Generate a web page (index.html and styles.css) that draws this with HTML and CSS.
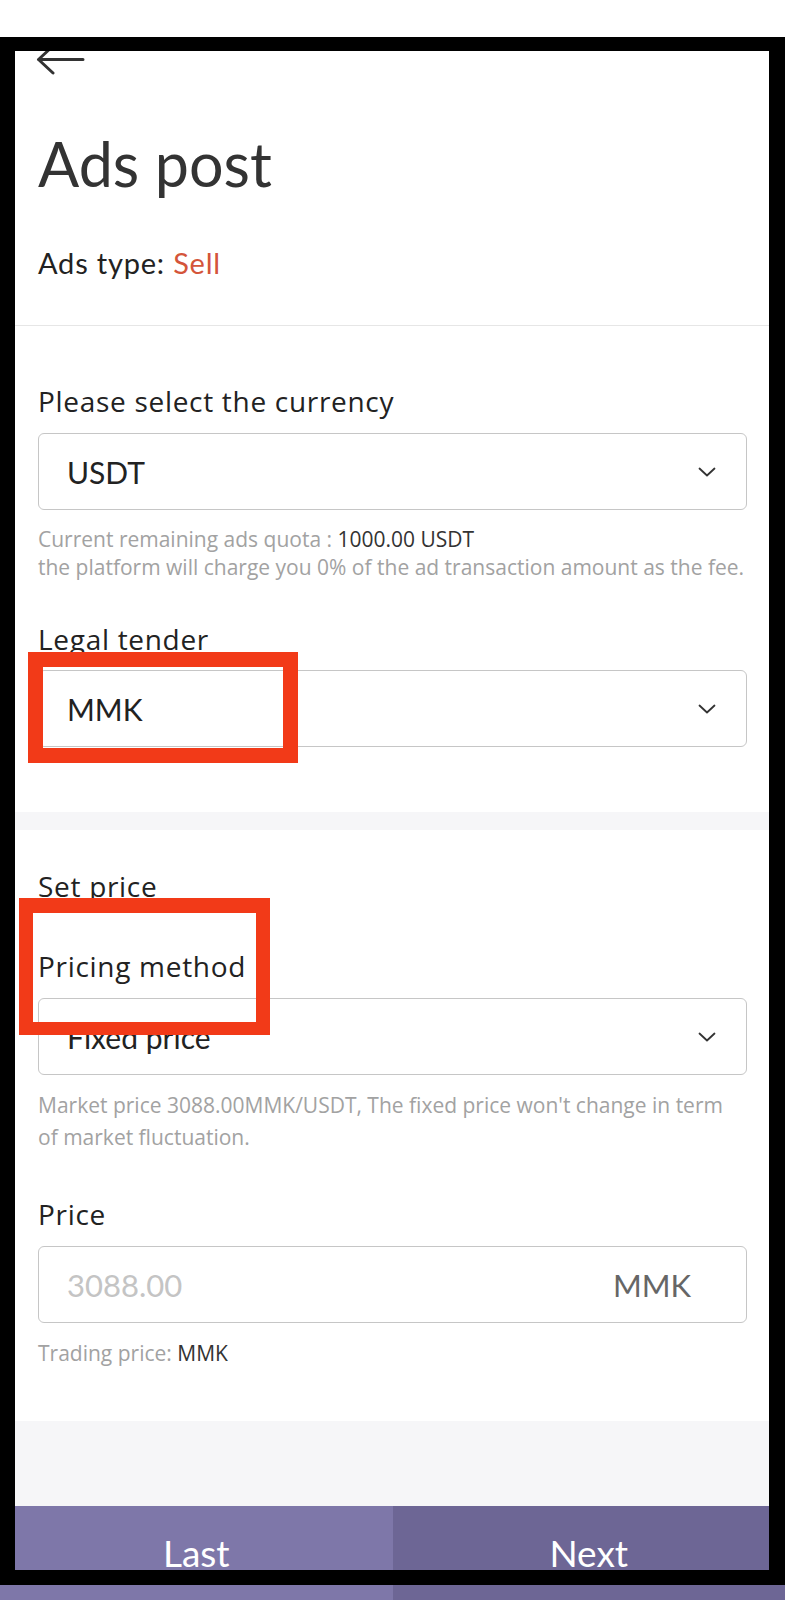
FILE: index.html
```html
<!DOCTYPE html>
<html lang="en">
<head>
<meta charset="utf-8">
<title>Ads post</title>
<link rel="stylesheet" href="styles.css">
</head>
<body>
<div class="page">
  <header class="head">
    <div class="topbar">
      <svg class="back" viewBox="0 0 49 31" width="49" height="31" aria-hidden="true">
        <path d="M2.5 15.5 H47 M17 2 L2.5 15.5 L17 29" fill="none" stroke="#333" stroke-width="3" stroke-linecap="round" stroke-linejoin="round"/>
      </svg>
    </div>
    <h1 class="title">Ads post</h1>
    <p class="ads-type">Ads type: <span class="sell">Sell</span></p>
  </header>

  <section class="section sec-currency">
    <p class="label">Please select the currency</p>
    <div class="select sel-first">
      <span class="value">USDT</span>
      <svg class="chev" viewBox="0 0 18 10" width="18" height="10" aria-hidden="true"><path d="M1.5 1.5 L9 8.5 L16.5 1.5" fill="none" stroke="#333" stroke-width="1.8" stroke-linecap="round" stroke-linejoin="round"/></svg>
    </div>
    <p class="helper helper-quota">Current remaining ads quota : <span class="strong">1000.00 USDT</span><br>the platform will charge you 0% of the ad transaction amount as the fee.</p>
    <p class="label label-legal">Legal tender</p>
    <div class="select sel-legal">
      <span class="value">MMK</span>
      <svg class="chev" viewBox="0 0 18 10" width="18" height="10" aria-hidden="true"><path d="M1.5 1.5 L9 8.5 L16.5 1.5" fill="none" stroke="#333" stroke-width="1.8" stroke-linecap="round" stroke-linejoin="round"/></svg>
    </div>
  </section>

  <div class="band"></div>

  <section class="section sec-price">
    <p class="label">Set price</p>
    <p class="label label-method">Pricing method</p>
    <div class="select sel-method">
      <span class="value">Fixed price</span>
      <svg class="chev" viewBox="0 0 18 10" width="18" height="10" aria-hidden="true"><path d="M1.5 1.5 L9 8.5 L16.5 1.5" fill="none" stroke="#333" stroke-width="1.8" stroke-linecap="round" stroke-linejoin="round"/></svg>
    </div>
    <p class="helper helper-market">Market price 3088.00MMK/USDT, The fixed price won't change in term<br>of market fluctuation.</p>
    <p class="label label-price">Price</p>
    <div class="select input">
      <span class="placeholder">3088.00</span>
      <span class="unit">MMK</span>
    </div>
    <p class="helper trading">Trading price: <span class="strong">MMK</span></p>
  </section>

  <div class="filler"></div>

  <div class="actions">
    <div class="btn btn-last">Last</div>
    <div class="btn btn-next">Next</div>
  </div>

  <div class="frame"></div>
  <div class="mark mark-legal"></div>
  <div class="mark mark-method"></div>
</div>
</body>
</html>
```
FILE: styles.css
```css
* { box-sizing: border-box; }
html, body { margin: 0; padding: 0; background: #fff; }
body { font-family: Lato, "Liberation Sans", sans-serif; color: #333; }

.page { position: relative; width: 785px; height: 1600px; overflow: hidden; background: #fff; }

.head { padding-bottom: 45px; border-bottom: 1px solid #e6e6e6; }
.topbar { height: 127px; padding: 44px 0 0 36px; }
.back { display: block; }
.title { margin: 0; padding-left: 38px; font-size: 61px; line-height: 73px; font-weight: 400; color: #333; }
.ads-type { margin: 45px 0 0; padding-left: 38px; font-size: 29px; line-height: 35px; color: #222; letter-spacing: 0.8px; }
.sell { color: #d4553a; }

.section { padding: 0 38px; }
.sec-currency { padding-top: 58px; padding-bottom: 65px; }
.sec-price { padding-top: 39px; padding-bottom: 54px; }

.label { margin: 0; font-family: "Open Sans", Lato, sans-serif; font-size: 28px; line-height: 34px; color: #222; letter-spacing: 0.7px; }
.label-legal { margin-top: 41px; }
.label-method { margin-top: 46px; }
.label-price { margin-top: 44px; }

.select {
  height: 77px;
  margin-top: 15px;
  border: 1.5px solid #c6c6c6;
  border-radius: 6px;
  display: flex;
  align-items: center;
  justify-content: space-between;
  padding: 0 30px 0 28px;
  font-size: 30px;
  color: #222;
}
.sel-legal { margin-top: 14px; }
.chev { display: block; }

.input { padding-right: 55px; }
.placeholder { color: #c4c4c4; font-size: 31px; }
.unit { color: #666; font-size: 31px; }

.helper { margin: 15px 0 0; font-family: "Open Sans", Lato, sans-serif; font-size: 21px; line-height: 28px; color: #a2a2a2; }
.helper .strong { color: #333; }
.helper-market { margin-top: 14px; line-height: 32px; }
.trading { margin-top: 16px; font-size: 21px; }

.band { height: 18px; background: #f6f6f8; }
.filler { height: 85px; background: #f6f6f8; }

.actions { display: flex; height: 94px; }
.btn { flex: 1; color: #fff; font-size: 37px; line-height: 94px; text-align: center; }
.btn-last { background: #7e77a9; }
.btn-next { background: #6d6695; }

.frame {
  position: absolute;
  left: 0;
  top: 37px;
  width: 785px;
  height: 1548px;
  border-style: solid;
  border-color: #000;
  border-width: 14px 16px 15px 15px;
}
.mark { position: absolute; border: 15px solid #f23a18; }
.mark-legal { left: 28px; top: 652px; width: 270px; height: 111px; }
.mark-method { left: 19px; top: 898px; width: 251px; height: 137px; border-width: 15px 14px 13px 14px; }
```
